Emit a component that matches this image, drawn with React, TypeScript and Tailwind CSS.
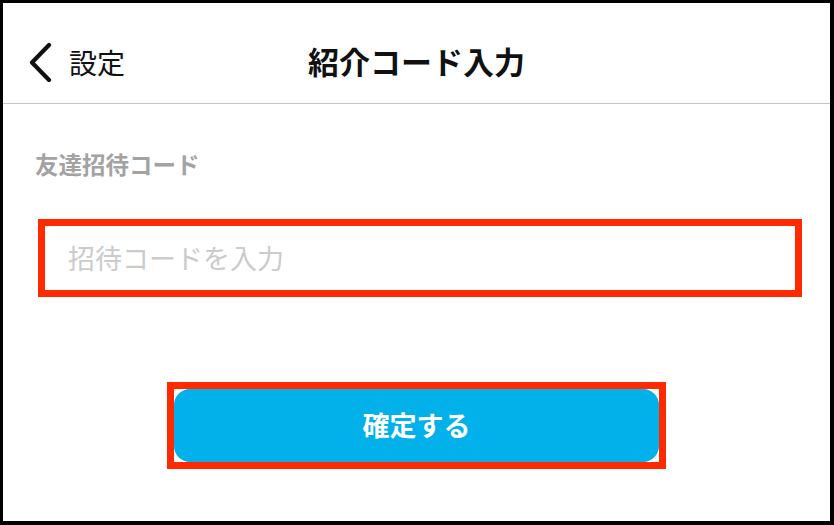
const jp = { fontFamily: '"Noto Sans CJK JP", "Noto Sans", sans-serif' };

function BackChevron() {
  return (
    <svg width="24" height="40" viewBox="0 0 24 40" fill="none" className="shrink-0">
      <polyline
        points="20,3 3,20.5 20,38"
        stroke="#111"
        strokeWidth="4.2"
        strokeLinecap="round"
        strokeLinejoin="round"
      />
    </svg>
  );
}

export default function App() {
  return (
    <div
      className="flex h-[525px] w-[834px] flex-col border-b-[4px] border-l-[3px] border-r-[4px] border-t-[3px] border-black bg-white"
      style={jp}
    >
      {/* ヘッダー */}
      <div className="grid h-[101px] grid-cols-[1fr_auto_1fr] items-center border-b border-[#c4c4c4] pt-[15px]">
        <div className="flex items-center gap-[16px] pl-[26px] pt-[2px]">
          <BackChevron />
          <span className="text-[28px] leading-[40px] text-[#111]">設定</span>
        </div>
        <h1 className="text-[31px] font-bold leading-[40px] text-[#111]">紹介コード入力</h1>
        <div />
      </div>

      <p className="mt-[48px] pl-[32px] text-[23.5px] font-bold leading-[24px] text-[#a3a3a3]">友達招待コード</p>

      <div className="ml-[35px] mr-[28px] mt-[43px] flex h-[78px] items-center border-[7px] border-[#ff2a00] bg-white pl-[23px]">
        <input
          className="w-full bg-transparent text-[27px] text-[#333] outline-none placeholder:text-[#cbcbcb]"
          placeholder="招待コードを入力"
        />
      </div>

      <div className="mx-auto mt-[85px] w-[499px] border-[7px] border-[#ff2a00] bg-white">
        <button className="flex h-[73px] w-full items-center justify-center rounded-[16px] bg-[#02b1ea] text-[27px] font-bold text-white">
          確定する
        </button>
      </div>
    </div>
  );
}
